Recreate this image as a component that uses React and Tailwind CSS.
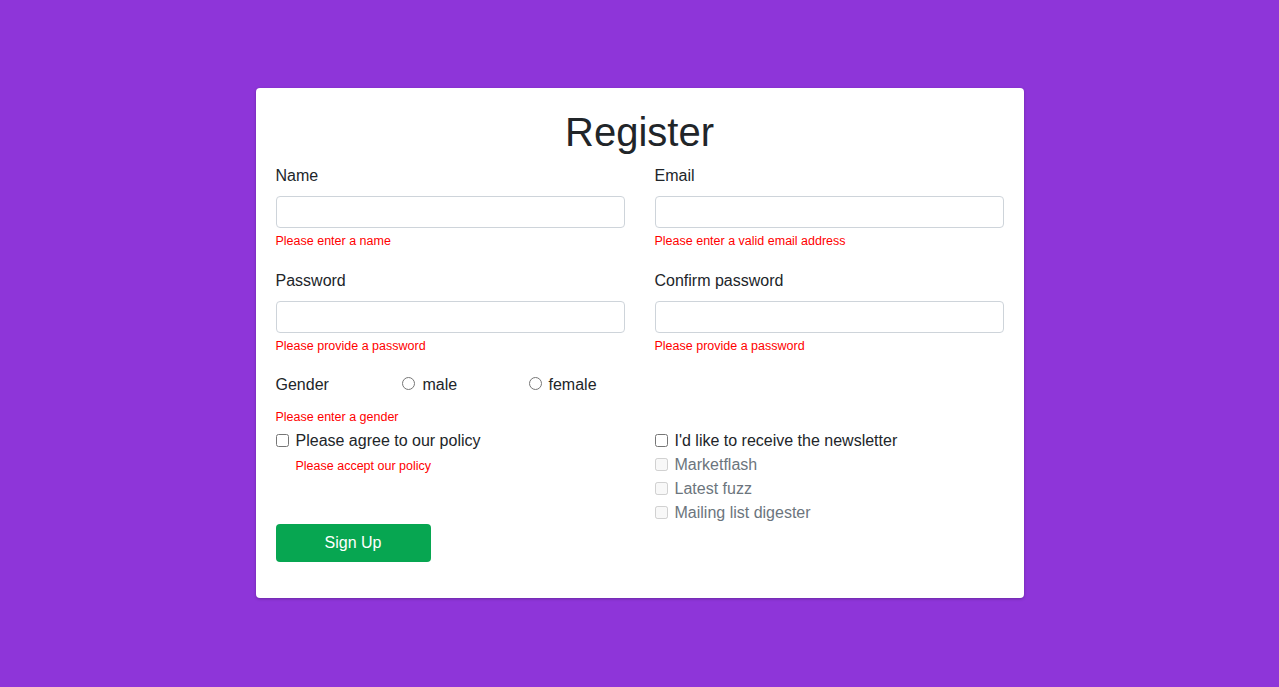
export default function App() {
    const fields = [
        {
            gap: 'mb-[18px]',
            items: [
                { label: 'Name', type: 'text', error: 'Please enter a name' },
                { label: 'Email', type: 'email', error: 'Please enter a valid email address' }
            ]
        },
        {
            gap: 'mb-[17px]',
            items: [
                { label: 'Password', type: 'password', error: 'Please provide a password' },
                { label: 'Confirm password', type: 'password', error: 'Please provide a password' }
            ]
        }
    ];

    const lists = ['Marketflash', 'Latest fuzz', 'Mailing list digester'];

    return (
        <div className="min-h-screen bg-[#8e35d9] pt-[88px] font-['Liberation_Sans',Arial,sans-serif] text-[#212529]">
            <div className="mx-auto w-[768px] rounded-[4px] bg-white px-5 pt-5 pb-9 shadow-[0_1px_3px_rgba(0,0,0,0.25)]">
                <h1 className="mb-2 text-center text-[40px] leading-[48px] font-normal">Register</h1>

                {fields.map((row, i) => (
                    <div key={i} className="grid grid-cols-2 gap-[30px]">
                        {row.items.map((f) => (
                            <div key={f.label} className={row.gap}>
                                <label className="mb-2 block text-base leading-6">{f.label}</label>
                                <input
                                    type={f.type}
                                    className="block h-8 w-full rounded-[4px] border border-[#ced4da] bg-white px-3 outline-none"
                                />
                                <div className="mt-1 text-[12.5px] leading-[19px] text-[#ff0000]">{f.error}</div>
                            </div>
                        ))}
                    </div>
                ))}

                <div className="flex h-6 items-center text-base leading-6">
                    <span className="w-[126px]">Gender</span>
                    <label className="flex w-[127px] items-center">
                        <input type="radio" name="gender" className="m-0 -mt-[3px] h-[13px] w-[13px]" />
                        <span className="ml-[8px]">male</span>
                    </label>
                    <label className="flex items-center">
                        <input type="radio" name="gender" className="m-0 -mt-[3px] h-[13px] w-[13px]" />
                        <span className="ml-[7px]">female</span>
                    </label>
                </div>
                <div className="mt-[11px] text-[12.5px] leading-[19px] text-[#ff0000]">Please enter a gender</div>

                <div className="mt-[2px] grid grid-cols-2 gap-[30px]">
                    <div>
                        <label className="flex h-6 items-center text-base leading-6">
                            <input type="checkbox" className="m-0 -mt-[2px] h-[13px] w-[13px]" />
                            <span className="ml-[7px]">Please agree to our policy</span>
                        </label>
                        <div className="mt-1 pl-5 text-[12.5px] leading-[19px] text-[#ff0000]">Please accept our policy</div>
                    </div>
                    <div>
                        <label className="flex h-6 items-center text-base leading-6">
                            <input type="checkbox" className="m-0 -mt-[2px] h-[13px] w-[13px]" />
                            <span className="ml-[7px]">I'd like to receive the newsletter</span>
                        </label>
                        {lists.map((item) => (
                            <label key={item} className="flex h-6 items-center text-base leading-6 text-[#6c757d]">
                                <input type="checkbox" disabled className="m-0 -mt-[2px] h-[13px] w-[13px]" />
                                <span className="ml-[7px]">{item}</span>
                            </label>
                        ))}
                    </div>
                </div>

                <button className="-mt-px block h-[38px] w-[155px] rounded-[4px] bg-[#07a651] text-base font-medium text-white">
                    Sign Up
                </button>
            </div>
        </div>
    );
}
